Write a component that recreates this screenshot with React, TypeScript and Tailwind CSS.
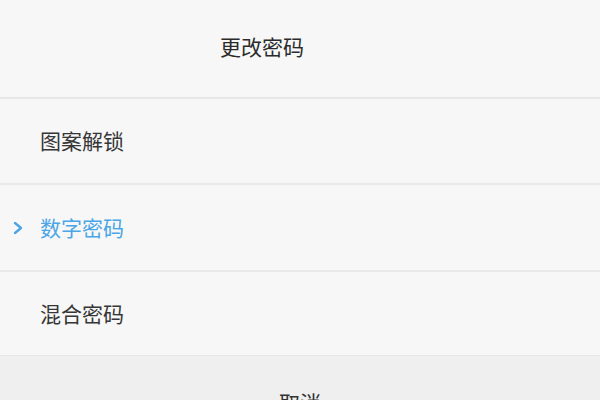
import { useState } from "react";

type Option = {
  id: string;
  label: string;
  height: string;
}

const options: Option[] = [
  { id: "pattern", label: "图案解锁", height: "h-[84px]" },
  { id: "pin", label: "数字密码", height: "h-[85px]" },
  { id: "mixed", label: "混合密码", height: "h-[83px]" },
];

const Chevron = () => (
  <svg className="absolute left-[13px] top-1/2 -translate-y-1/2" width="10" height="13" viewBox="0 0 10 13" fill="none">
    <polyline points="2,1.5 8,6.5 2,11.5" stroke="#4aa6e6" strokeWidth="2.4" strokeLinecap="round" strokeLinejoin="round" />
  </svg>
);

const App = () => {
  const [selected, setSelected] = useState("pin");

  return (
    <div className="w-[600px] h-[400px] overflow-hidden bg-[#f7f7f7] select-none" style={{ fontFamily: '"Noto Sans CJK SC", "Noto Sans", sans-serif' }}>
      <div className="h-[97px] flex items-center justify-center pr-[76px] pb-[4px] text-[21px] text-[#2b2b2b]">更改密码</div>
      <div className="h-[2px] bg-[#e7e7e7]" />

      {options.map((option, i) => (
        <div key={option.id}>
          <button
            className={`relative w-full flex items-center pl-[40px] text-[21px] text-left ${option.height} ${selected === option.id ? "text-[#4aa6e6]" : "text-[#363636]"}`}
            onClick={() => setSelected(option.id)}
          >
            {selected === option.id && <Chevron />}
            {option.label}
          </button>
          {i < options.length - 1 && <div className="h-[2px] bg-[#e9e9e9]" />}
        </div>
      ))}

      <div className="h-px bg-[#e6e6e6]" />
      <div className="h-[94px] bg-[#efefef] flex items-center justify-center text-[21px] text-[#333]">取消</div>
    </div>
  );
}

export default App;
